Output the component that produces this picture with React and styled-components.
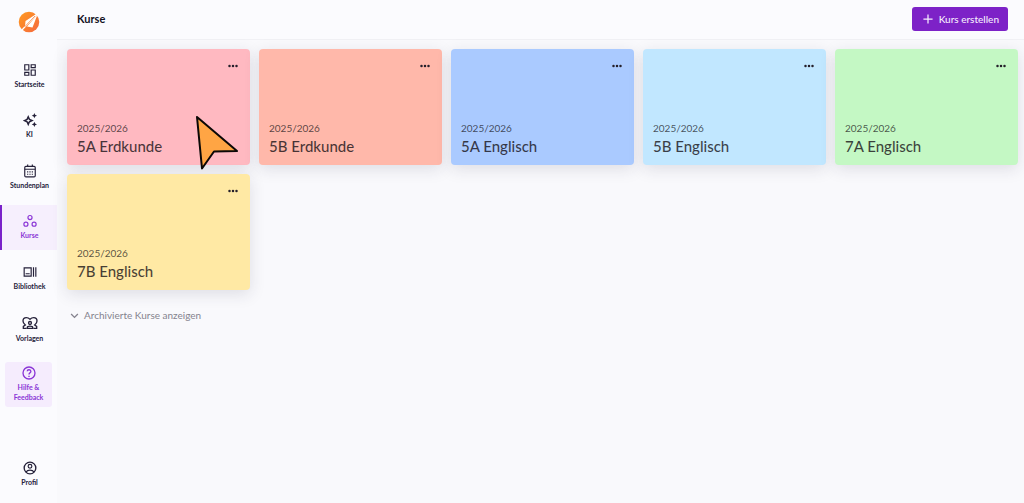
import React from 'react';
import styled, { createGlobalStyle, css } from 'styled-components';

const GlobalStyle = createGlobalStyle`
  *, *::before, *::after { box-sizing: border-box; }
  body {
    margin: 0;
    background: #f9f9fc;
    color: #25213a;
    font-family: Lato, "Liberation Sans", sans-serif;
  }
  button { font: inherit; color: inherit; border: 0; background: none; padding: 0; cursor: pointer; }
  svg { display: block; }
`;

const Shell = styled.div`
  display: grid;
  grid-template-columns: 57px minmax(0, 1fr);
  min-height: 100vh;
`;

const Sidebar = styled.nav`
  display: flex;
  flex-direction: column;
  background: #fbfbfe;
  padding-bottom: 6px;
`;

const LogoLink = styled.a`
  display: flex;
  justify-content: center;
  height: 54px;
  padding-top: 11px;
`;

const NavList = styled.ul`
  flex: 1;
  display: flex;
  flex-direction: column;
  justify-content: space-between;
  list-style: none;
  margin: 0;
  padding: 0;
`;

const NavLink = styled.a`
  display: flex;
  flex-direction: column;
  align-items: center;
  gap: 2px;
  min-height: 45px;
  padding: 9px 0 0;
  border-left: 2px solid transparent;
  color: #25213a;
  font-size: 7px;
  font-weight: 700;
  line-height: 10px;
  text-align: center;
  text-decoration: none;
  ${(p) => p.$active && css`
    color: #8a35d6;
    background: #f6effd;
    border-left-color: #7a22c9;
  `}
`;

const HelpLink = styled(NavLink)`
  margin: 11px 5px 45px;
  padding-top: 3px;
  gap: 1px;
  border-left: 0;
  border-radius: 3px;
  color: #8a35d6;
  background: #f5ecfd;
`;

const Main = styled.main`
  min-width: 0;
`;

const Header = styled.header`
  display: flex;
  align-items: center;
  justify-content: space-between;
  height: 40px;
  padding: 0 16px 1px 20px;
  background: #fbfbfe;
  border-bottom: 1px solid #f1f1f5;
`;

const Title = styled.h1`
  margin: 0;
  color: #14121f;
  font-size: 11px;
  font-weight: 700;
  line-height: 16px;
`;

const CreateButton = styled.button`
  && {
    display: flex;
    align-items: center;
    gap: 6px;
    height: 24px;
    padding: 0 9px 0 11px;
    border-radius: 3px;
    background: #7d22c7;
    color: #f6edfd;
    font-size: 10px;
    font-weight: 500;
  }
`;

const Content = styled.div`
  padding: 9px 6px 10px 10px;
`;

const Grid = styled.div`
  display: grid;
  grid-template-columns: repeat(5, minmax(0, 1fr));
  gap: 9px;
`;

const Card = styled.article`
  position: relative;
  display: flex;
  flex-direction: column;
  justify-content: space-between;
  height: 116px;
  padding: 12px 10px 10px;
  border-radius: 4px;
  background: ${(p) => p.$color};
  box-shadow: 0 4px 16px rgba(40, 35, 70, 0.13);
`;

const MoreButton = styled.button`
  align-self: flex-end;
  width: 14px;
  height: 10px;
`;

const Year = styled.p`
  margin: 0;
  color: rgba(20, 18, 22, 0.72);
  font-size: 10px;
  line-height: 14px;
`;

const CourseName = styled.h2`
  margin: 2px 0 0;
  color: rgba(20, 15, 20, 0.78);
  font-size: 15px;
  font-weight: 500;
  line-height: 18px;
`;

const ArchiveToggle = styled.button`
  && {
    display: flex;
    align-items: center;
    gap: 5px;
    margin: 17px 0 0 3px;
    color: #85838e;
    font-size: 10px;
    line-height: 16px;
  }
`;

const Pointer = styled.svg`
  position: absolute;
  z-index: 2;
  top: 64px;
  left: 127px;
  pointer-events: none;
`;

const Icon = ({ size = 14, children, ...rest }) => (
  <svg width={size} height={size} viewBox="0 0 24 24" fill="none" stroke="currentColor" strokeWidth="2" aria-hidden="true" {...rest}>
    {children}
  </svg>
);

const Logo = () => (
  <svg width="22" height="22" viewBox="0 0 44 44" aria-hidden="true">
    <defs>
      <linearGradient id="logoFill" x1="0" y1="0" x2="1" y2="1">
        <stop offset="0" stopColor="#ff9a1f" />
        <stop offset="1" stopColor="#f5683f" />
      </linearGradient>
    </defs>
    <circle cx="22" cy="22" r="20.500" fill="url(#logoFill)" />
    <path d="M38 5 15 20l-1 12L36 9Z" fill="#fff" />
    <path d="M39 7 18 31l11 2Z" fill="#fff" />
    <path d="M42 2 6 40" stroke="#fff" strokeWidth="2.400" />
    <path d="M34 10 13 32" stroke="#f9803a" strokeWidth="1.600" />
  </svg>
);

const icons = {
  home: (
    <Icon>
      <path d="M3 3h7v9H3zM14 3h7v5h-7zM14 12h7v9h-7zM3 16h7v5H3z" />
    </Icon>
  ),
  ai: (
    <Icon>
      <path d="M9 6.500 11 11l4.500 2-4.500 2L9 19.500 7 15l-4.500-2L7 11z" strokeWidth="2.500" />
      <path d="m19.500 0 1.300 3.200L24 4.500l-3.200 1.300L19.500 9l-1.300-3.200L15 4.500l3.200-1.300zM19.500 15l1.300 3.200 3.200 1.300-3.200 1.300-1.300 3.200-1.300-3.200-3.200-1.300 3.200-1.300z" fill="currentColor" stroke="none" />
    </Icon>
  ),
  schedule: (
    <Icon>
      <rect x="3" y="4" width="18" height="18" rx="2" />
      <path d="M3 9h18M8 1v4M16 1v4" />
      <path d="M7 13.500h2m2 0h2m2 0h2M7 17.500h2m2 0h2m2 0h2" />
    </Icon>
  ),
  courses: (
    <Icon>
      <circle cx="12" cy="6" r="3.500" />
      <circle cx="5" cy="17.500" r="3.500" />
      <circle cx="19" cy="17.500" r="3.500" />
    </Icon>
  ),
  library: (
    <Icon>
      <path d="M2 5h12v14H2zM18 4v16M22 4v16M4.500 15h7" />
    </Icon>
  ),
  templates: (
    <Icon size={16}>
      <path d="M7 20H2v-3l3-2C2.500 13 1.500 11 1.500 9c0-3 2-5 5-5 2.500 0 4 1 5.500 2.500C13.500 5 15 4 17.500 4c3 0 5 2 5 5 0 2-1 4-3.500 6l3 2v3h-5" />
      <circle cx="12" cy="12" r="2.200" />
      <path d="M8 20v-1.500c0-2.500 8-2.500 8 0V20z" />
    </Icon>
  ),
  help: (
    <Icon size={16}>
      <circle cx="12" cy="12" r="9" />
      <path d="M9.300 9.500c.2-3.300 5.600-3 5.500.1-.1 2-2.800 2.200-2.800 4.600M12 16v2" />
    </Icon>
  ),
  profile: (
    <Icon>
      <circle cx="12" cy="12" r="10" strokeWidth="2.300" />
      <circle cx="12" cy="9" r="3.200" />
      <path d="M5 19c3-4.500 11-4.500 14 0" />
    </Icon>
  ),
};

const navItems = [
  { icon: 'home', label: 'Startseite' },
  { icon: 'ai', label: 'KI' },
  { icon: 'schedule', label: 'Stundenplan' },
  { icon: 'courses', label: 'Kurse', active: true },
  { icon: 'library', label: 'Bibliothek' },
  { icon: 'templates', label: 'Vorlagen' },
];

const courses = [
  { name: '5A Erdkunde', color: '#ffb9c1', pointer: true },
  { name: '5B Erdkunde', color: '#ffb8aa' },
  { name: '5A Englisch', color: '#aacaff' },
  { name: '5B Englisch', color: '#c1e7ff' },
  { name: '7A Englisch', color: '#c4f8c4' },
  { name: '7B Englisch', color: '#ffe9a4' },
];

export default function App() {
  return (
    <>
      <GlobalStyle />
      <Shell>
        <Sidebar>
          <LogoLink href="#" aria-label="Start"><Logo /></LogoLink>
          <NavList>
            {navItems.map(({ icon, label, active }) => (
              <li key={label}>
                <NavLink href="#" $active={active} aria-current={active ? 'page' : undefined}>
                  {icons[icon]}
                  {label}
                </NavLink>
              </li>
            ))}
          </NavList>
          <HelpLink href="#">
            {icons.help}
            <span>Hilfe &amp;<br />Feedback</span>
          </HelpLink>
          <NavLink href="#">
            {icons.profile}
            Profil
          </NavLink>
        </Sidebar>
        <Main>
          <Header>
            <Title>Kurse</Title>
            <CreateButton type="button">
              <Icon size={10}><path d="M12 1v22M1 12h22" strokeWidth="3" /></Icon>
              Kurs erstellen
            </CreateButton>
          </Header>
          <Content>
            <Grid>
              {courses.map(({ name, color, pointer }) => (
                <Card key={name} $color={color}>
                  <MoreButton type="button" aria-label="Mehr Optionen">
                    <svg width="14" height="10" viewBox="0 0 14 10" fill="#25202b" aria-hidden="true">
                      <circle cx="3.500" cy="5" r="1.250" />
                      <circle cx="7" cy="5" r="1.250" />
                      <circle cx="10.500" cy="5" r="1.250" />
                    </svg>
                  </MoreButton>
                  <div>
                    <Year>2025/2026</Year>
                    <CourseName>{name}</CourseName>
                  </div>
                  {pointer && (
                    <Pointer width="46" height="60" viewBox="0 0 46 60" aria-hidden="true">
                      <path d="M3 4 43 38 20 38.500 8 55.500Z" fill="#ffa544" stroke="#0b0806" strokeWidth="2" strokeLinejoin="round" />
                    </Pointer>
                  )}
                </Card>
              ))}
            </Grid>
            <ArchiveToggle type="button" aria-expanded="false">
              <Icon size={9}><path d="m3 8 9 9 9-9" strokeWidth="3.500" /></Icon>
              Archivierte Kurse anzeigen
            </ArchiveToggle>
          </Content>
        </Main>
      </Shell>
    </>
  );
}
